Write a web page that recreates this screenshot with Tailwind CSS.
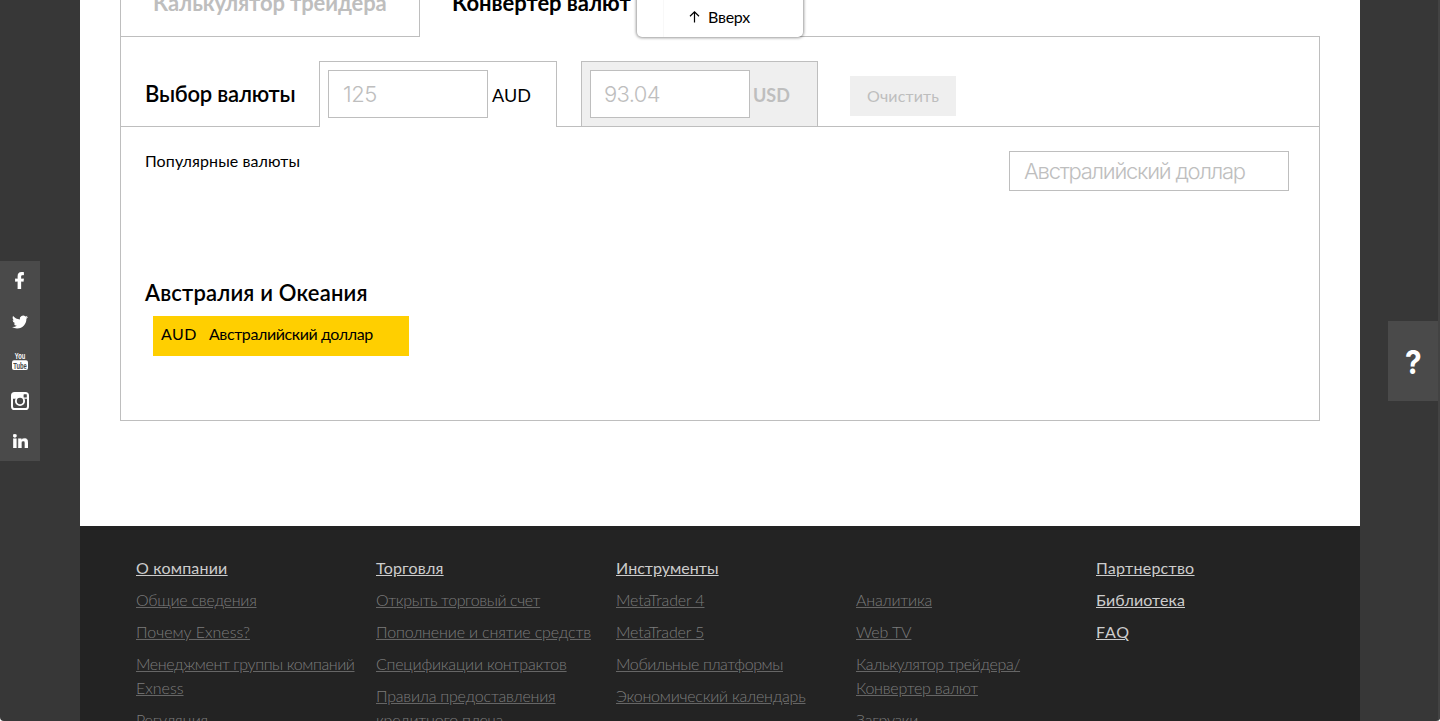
<!DOCTYPE html>
<html lang="ru">
<head>
<meta charset="utf-8">
<title>Конвертер валют</title>
<script src="https://cdn.jsdelivr.net/npm/@tailwindcss/browser@4"></script>
</head>
<body class="bg-white font-['Lato','Open_Sans',sans-serif] text-black">
<div class="relative h-[721px] overflow-hidden rounded-b-[4px] bg-[#373737]">
  <main class="ml-20 flex h-[526px] w-[1280px] flex-col bg-white px-10">
    <div class="flex h-[37px] shrink-0 whitespace-nowrap text-[22px] font-bold">
      <div class="w-[300px] border-x border-b border-[#bebebe] pl-8 text-[#bebebe]"><span class="-mt-3 block w-max leading-[30px] tracking-[-0.11px]">Калькулятор трейдера</span></div>
      <div class="w-[260px] pl-8"><span class="-mt-3 block w-max leading-[30px] tracking-[-0.04px]">Конвертер валют</span></div>
      <div class="flex-1 border-b border-[#bebebe]"></div>
    </div>
    <section class="h-[384px] border-x border-b border-[#bebebe]">
      <div class="flex h-[90px] items-end whitespace-nowrap">
        <div class="h-full w-[198px] border-b border-[#bebebe] pt-[42px] pl-6 text-[22px] leading-[30px] font-semibold tracking-[-0.22px]">Выбор валюты</div>
        <div class="flex h-[66px] w-[238px] items-start border-x border-t border-[#bebebe] pt-2 pl-2">
          <div class="flex h-12 w-40 items-center border border-[#bebebe] pl-3.5 font-['Inter',sans-serif] text-[22px] font-light tracking-[-0.5px] text-[#bebebe]">125</div>
          <span class="ml-1 pt-px text-lg leading-12 tracking-[0.06px]">AUD</span>
        </div>
        <div class="h-full w-6 border-b border-[#bebebe]"></div>
        <div class="flex h-[66px] w-[237px] items-start border border-[#bebebe] bg-[#efefef] pt-2 pl-2">
          <div class="flex h-12 w-40 items-center border border-[#bebebe] bg-white pl-[13px] font-['Inter',sans-serif] text-[22px] font-light tracking-[-0.65px] text-[#bebebe]">93.04</div>
          <span class="ml-[3px] pt-px text-lg leading-12 font-bold text-[#bebebe]">USD</span>
        </div>
        <div class="h-full flex-1 border-b border-[#bebebe] pt-[39px] pl-8">
          <div class="flex h-10 w-[106px] items-center justify-center bg-[#efefef] text-base tracking-[0.13px] text-[#bebebe]">Очистить</div>
        </div>
      </div>
      <div class="flex h-[151px] justify-between pt-6 pr-[30px] pl-6">
        <span class="text-base leading-5 tracking-[0.1px]">Популярные валюты</span>
        <div class="flex h-10 w-[280px] items-center border border-[#bebebe] pl-3.5 font-['Inter',sans-serif] text-[22px] font-light tracking-[-1.24px] text-[#bebebe]">Австралийский доллар</div>
      </div>
      <h2 class="pl-6 text-[22px] leading-[30px] font-semibold tracking-[0.17px]">Австралия и Океания</h2>
      <div class="mt-2 ml-8 flex h-10 w-64 bg-[#ffcf00] pl-2 text-base leading-9">
        <span class="w-12 tracking-[0.4px]">AUD</span><span class="tracking-[-0.4px]">Австралийский доллар</span>
      </div>
    </section>
  </main>

  <footer class="ml-20 flex h-[195px] w-[1280px] bg-[#232323] pt-[30px] pl-14 text-base leading-6 font-light text-[#7c7c7c] underline decoration-[#666]">
    <ul class="w-60 space-y-2">
      <li class="font-normal tracking-[0.19px] text-[#ccc] underline decoration-[#ccc]">О компании</li>
      <li class="tracking-[-0.25px]">Общие сведения</li>
      <li class="tracking-[-0.03px]">Почему Exness?</li>
      <li><span class="tracking-[-0.42px]">Менеджмент группы компаний</span><br>Exness</li>
      <li class="tracking-[-0.19px]">Регуляция</li>
    </ul>
    <ul class="w-60 space-y-2">
      <li class="font-normal tracking-[0.19px] text-[#ccc] underline decoration-[#ccc]">Торговля</li>
      <li class="tracking-[-0.39px]">Открыть торговый счет</li>
      <li class="tracking-[-0.16px]">Пополнение и снятие средств</li>
      <li class="tracking-[-0.21px]">Спецификации контрактов</li>
      <li class="tracking-[-0.22px]">Правила предоставления<br>кредитного плеча</li>
    </ul>
    <ul class="w-60 space-y-2">
      <li class="font-normal tracking-[0.03px] text-[#ccc] underline decoration-[#ccc]">Инструменты</li>
      <li class="tracking-[-0.16px]">MetaTrader 4</li>
      <li class="tracking-[-0.2px]">MetaTrader 5</li>
      <li class="tracking-[-0.4px]">Мобильные платформы</li>
      <li class="tracking-[-0.23px]">Экономический календарь</li>
    </ul>
    <ul class="w-60 space-y-2 pt-8">
      <li class="tracking-[-0.19px]">Аналитика</li>
      <li class="tracking-[-0.13px]">Web TV</li>
      <li><span class="tracking-[-0.35px]">Калькулятор трейдера/</span><br><span class="tracking-[-0.23px]">Конвертер валют</span></li>
      <li class="tracking-[-0.22px]">Загрузки</li>
    </ul>
    <ul class="space-y-2 font-normal text-[#ccc] underline decoration-[#ccc]">
      <li class="tracking-[0.27px]">Партнерство</li>
      <li class="tracking-[0.11px]">Библиотека</li>
      <li class="tracking-[0.84px]">FAQ</li>
    </ul>
  </footer>

  <!-- "Back to top" button -->
  <div class="absolute top-[-10px] left-[637px] flex h-[47px] w-[166px] rounded-[5px] bg-white shadow-[0_0_3px_1px_rgba(0,0,0,0.4)]">
    <div class="w-[27px] border-r border-[#f8f8f8]"></div>
    <div class="flex items-center pt-[7px] pl-[25px] text-base tracking-[-0.23px]">
      <svg class="mr-2 h-3 w-[11px]" viewBox="0 0 11 12" fill="none" stroke="#000" stroke-width="1.2"><path d="M5.5 11.5V1M1 5.3 5.5.9 10 5.3"/></svg>
      <span>Вверх</span>
    </div>
  </div>

  <!-- Social links -->
  <nav class="absolute top-[261px] left-0 flex w-10 flex-col bg-[#4a4a4a] text-white">
    <a class="flex h-10 items-center justify-center pr-px pb-px"><svg class="h-[17px] w-[9px]" viewBox="20 0 276 512" preserveAspectRatio="none" fill="currentColor" stroke="currentColor" stroke-width="8"><path d="M279.14 288l14.22-84h-88.91v-60.13c0-25.35 12.42-50.06 52.24-50.06h36V6.26S260.43 0 225.36 0c-73.22 0-121.08 44.38-121.08 124.72V204H22.89V288h81.39v224h100.17V288z"/></svg></a>
    <a class="flex h-10 items-center justify-center pt-0.5"><svg class="h-4 w-4" viewBox="0 0 24 24" fill="currentColor"><path d="M23.953 4.57a10 10 0 01-2.825.775 4.958 4.958 0 002.163-2.723c-.951.555-2.005.959-3.127 1.184a4.92 4.92 0 00-8.384 4.482C7.69 8.095 4.067 6.13 1.64 3.162a4.822 4.822 0 00-.666 2.475c0 1.71.87 3.213 2.188 4.096a4.904 4.904 0 01-2.228-.616v.06a4.923 4.923 0 003.946 4.827 4.996 4.996 0 01-2.212.085 4.936 4.936 0 004.604 3.417 9.867 9.867 0 01-6.102 2.105c-.39 0-.779-.023-1.17-.067a13.995 13.995 0 007.557 2.209c9.053 0 13.998-7.496 13.998-13.985 0-.21 0-.42-.015-.63A9.935 9.935 0 0024 4.59z"/></svg></a>
    <a class="flex h-10 items-center justify-center"><svg class="h-[18px] w-4" viewBox="0 0 16 18" font-family="Liberation Sans, sans-serif" font-weight="bold"><g transform="scale(.6 1)"><text x="4.6" y="7.3" font-size="9.8" textLength="17.4" lengthAdjust="spacingAndGlyphs" fill="#fff">You</text></g><rect y="8.2" width="16" height="9.8" rx="2" fill="#fff"/><g transform="scale(.6 1)"><text x="2.2" y="16.6" font-size="9.6" textLength="22.4" lengthAdjust="spacingAndGlyphs" fill="#4a4a4a">Tube</text></g></svg></a>
    <a class="flex h-10 items-center justify-center"><svg class="h-[18px] w-[18px]" viewBox="0 0 18 18" fill="none" stroke="currentColor"><rect x="1" y="1" width="16" height="16" rx="2.6" stroke-width="2"/><path d="M1 3.2Q1 1 3.2 1H14.8Q17 1 17 3.2V6.8H1z" fill="currentColor" stroke="none"/><circle cx="9" cy="9" r="4.1" fill="#4a4a4a" stroke-width="1.9"/><rect x="12.6" y="2.2" width="3.2" height="3.2" rx=".5" fill="#4a4a4a" stroke="none"/></svg></a>
    <a class="flex h-10 items-center justify-center pb-px"><svg class="h-[14px] w-[15px]" viewBox="0 0 448 448" preserveAspectRatio="none" fill="currentColor" stroke="currentColor" stroke-width="14"><path d="M100.28 448H7.4V148.9h92.88zM53.79 108.1C24.09 108.1 0 83.5 0 53.8a53.79 53.79 0 0 1 107.58 0c0 29.7-24.1 54.3-53.79 54.3zM447.9 448h-92.68V302.4c0-34.7-.7-79.2-48.29-79.2-48.29 0-55.69 37.7-55.69 76.7V448h-92.78V148.9h89.08v40.8h1.3c12.4-23.5 42.69-48.3 87.88-48.3 94 0 111.28 61.9 111.28 142.3V448z"/></svg></a>
  </nav>

  <!-- Help button and scroll track -->
  <div class="absolute inset-y-0 right-0 w-0.5 bg-[#434343]"></div>
  <div class="absolute top-[321px] right-0.5 flex h-20 w-[50px] items-center justify-center bg-[#4a4a4a] pt-[3px] font-['Inter',sans-serif] text-[33px] font-bold text-white"><span class="scale-x-90">?</span></div>
</div>
</body>
</html>
